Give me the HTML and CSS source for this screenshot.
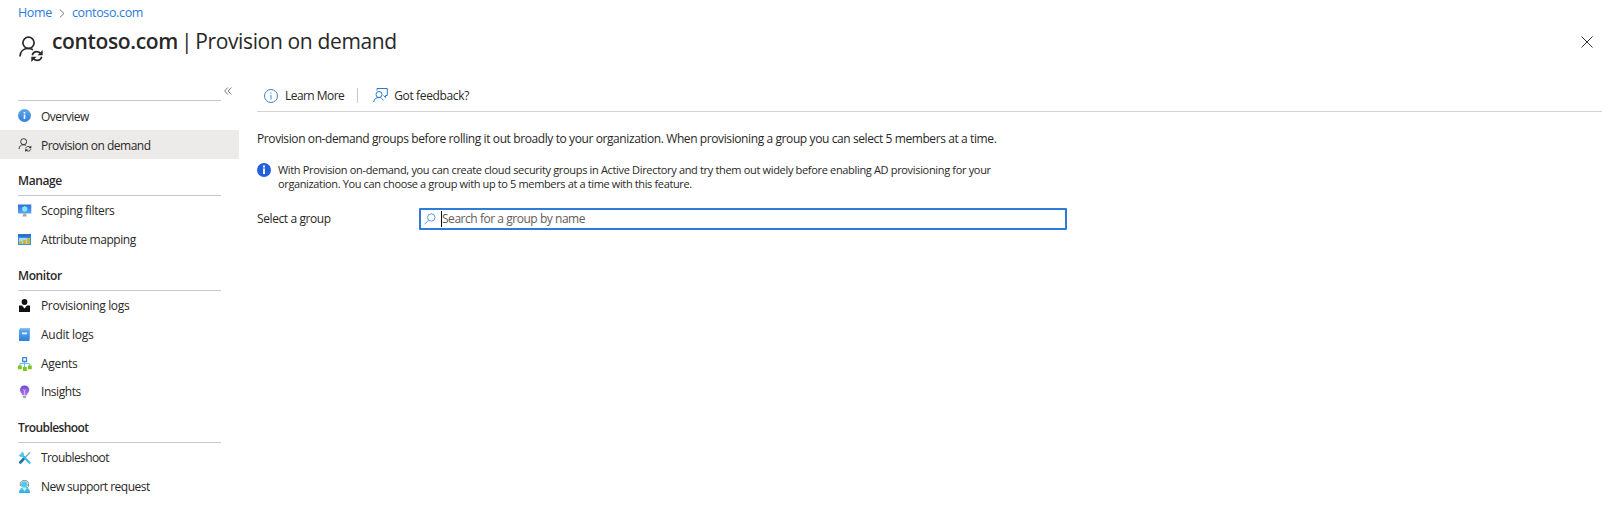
FILE: index.html
```html
<!DOCTYPE html>
<html lang="en">
<head>
<meta charset="utf-8">
<title>contoso.com | Provision on demand</title>
<link rel="stylesheet" href="styles.css">
</head>
<body>
<svg width="0" height="0" class="defs">
  <defs>
    <linearGradient id="blue" x1="0" y1="0" x2="0" y2="1"><stop offset="0" stop-color="#5ea8ea"/><stop offset="1" stop-color="#2f80dc"/></linearGradient>
    <linearGradient id="screen" x1="0" y1="0" x2="0" y2="1"><stop offset="0" stop-color="#2a72d4"/><stop offset="1" stop-color="#5aa6ee"/></linearGradient>
    <linearGradient id="purple" x1="0" y1="0" x2="0" y2="1"><stop offset="0" stop-color="#6e4bd0"/><stop offset="1" stop-color="#a878f0"/></linearGradient>
    <linearGradient id="cyan" x1="0" y1="0" x2="0" y2="1"><stop offset="0" stop-color="#4fd0ee"/><stop offset="1" stop-color="#2fa8dc"/></linearGradient>
    <symbol id="person-sync" viewBox="0 0 24 26">
      <g fill="none" stroke="#2b2a29" stroke-width="1.700">
        <circle cx="9.500" cy="6.800" r="5.600"/>
        <path d="M1 20.500C1.200 15.500 4.500 12.500 9 12.500c2 0 3.500.500 5 1.300"/>
        <path d="M13.300 19.200c.6-2.200 2.200-3.500 4.500-3.500 1.900 0 3.400.9 4.400 2.300M22.700 20.800c-.5 2.200-2.200 3.500-4.500 3.500-1.900 0-3.400-.9-4.400-2.300"/>
      </g>
      <path d="M23.700 14v5.200h-5.200zM12.300 26v-5.200h5.200z" fill="#2b2a29"/>
    </symbol>
  </defs>
</svg>

<header class="header">
  <nav class="crumbs">
    <a class="crumb home">Home</a>
    <svg class="crumb-sep" width="6" height="9" viewBox="0 0 6 9"><path d="M.8.500 5 4.500.8 8.500" fill="none" stroke="#777"/></svg>
    <a class="crumb">contoso.com</a>
  </nav>
  <div class="title-row">
    <svg class="title-icon" width="24" height="26"><use href="#person-sync"/></svg>
    <h1 class="title"><span class="tenant">contoso.com</span><span class="bar">|</span><span class="page-name">Provision on demand</span></h1>
    <svg class="close" width="12" height="12" viewBox="0 0 12 12"><path d="M.5.500l11 11M11.500.500l-11 11" stroke="#333" fill="none"/></svg>
  </div>
</header>

<div class="body">
  <aside class="sidebar">
    <div class="collapse"><svg width="8" height="8" viewBox="0 0 8 8"><path d="M3.800.500.700 4l3.100 3.500M7.300.500 4.200 4l3.100 3.500" fill="none" stroke="#666" stroke-width=".9"/></svg></div>
    <a class="item"><svg class="icon" viewBox="0 0 14 14"><circle cx="6.500" cy="6.500" r="6.500" fill="url(#blue)"/><path d="M5.700 5.500h1.600V10H5.700zM5.700 3h1.600v1.500H5.700z" fill="#fff"/></svg><span class="t-overview">Overview</span></a>
    <a class="item selected"><svg class="icon" viewBox="0 0 14 14"><use href="#person-sync" x="0" y="0" width="14" height="14"/></svg><span class="t-provision">Provision on demand</span></a>
    <h2 class="group">Manage</h2>
    <a class="item"><svg class="icon" viewBox="0 0 14 14"><path d="M0 .5h13.300v9H0z" fill="url(#screen)"/><path d="M5.500 9.500h2.500l.9 3H4.500z" fill="#a8a8a8"/><path d="M6.700 2l2.600 1.500v3L6.700 8 4.100 6.500v-3z" fill="#8be4fa"/></svg><span class="t-scoping">Scoping filters</span></a>
    <a class="item"><svg class="icon" viewBox="0 0 14 14"><path d="M0 1h13v11H0z" fill="#3d8fe0"/><path d="M0 1h13v3H0z" fill="#2a72cf"/><path d="M1 5h11v6H1z" fill="#a5d8f5"/><path d="M1 8.500h3V11H1zM5 7h3v4H5zM9 5h3v6H9z" fill="#c8b63c"/></svg><span class="t-attribute">Attribute mapping</span></a>
    <h2 class="group">Monitor</h2>
    <a class="item"><svg class="icon" viewBox="0 0 14 14"><circle cx="6.500" cy="3" r="2.900" fill="#111"/><path d="M1 6.500h3l2.500 3L9 6.500h3V13H1z" fill="#111"/></svg><span class="t-plogs">Provisioning logs</span></a>
    <a class="item"><svg class="icon" viewBox="0 0 14 14"><path d="M2 0h10v11H2z" fill="#8bc1f0"/><path d="M1 1.500h10.500V13H1z" fill="url(#blue)"/><path d="M4 4.500h5v1.800H4z" fill="#e4f3ff"/></svg><span class="t-audit">Audit logs</span></a>
    <a class="item"><svg class="icon" viewBox="0 0 14 14"><path d="M6.500 4v6M2 9V6.500h9.500V9" fill="none" stroke="#58c8ee"/><path d="M4.700.700h3.800v3.800H4.700z" fill="#fff" stroke="#4384dc" stroke-width="1.300"/><path d="M0 8.500h3.800v3.800H0zM5 10h3.800v4H5zM10 8.500h3.800v3.800H10z" fill="#7fc41c"/></svg><span class="t-agents">Agents</span></a>
    <a class="item short"><svg class="icon" viewBox="0 0 14 14"><path d="M6.500.500C9.500.500 11.300 2.400 11.300 5c0 2.200-2 3.200-2.400 5H4.200C3.800 8.200 2 7.200 2 5 2 2.400 3.600.500 6.500.500z" fill="url(#purple)"/><path d="M5 4.500l1.500 1 1.500-1M6.500 5.500V10" stroke="#dccbfc" stroke-width=".8" fill="none"/><path d="M4.700 10.500h3.700V12L7.500 13.300h-2L4.700 12z" fill="#aaa"/></svg><span class="t-insights">Insights</span></a>
    <h2 class="group trouble">Troubleshoot</h2>
    <a class="item"><svg class="icon" viewBox="0 0 14 14"><path d="M12.200 1.300L7 6.500" stroke="#7da9bd" stroke-width="1.300"/><path d="M6.500 7L2.300 11.500" stroke="#256fac" stroke-width="2.600" stroke-linecap="round"/><path d="M3.500 3.500l8 8.200" stroke="#38bde4" stroke-width="2.300" stroke-linecap="round"/><path d="M3.200.700L5.400 1.500 6 4 4 6 1.500 5.400.700 3.200 2.300 4 3.900 2.500z" fill="#45c8ec"/></svg><span class="t-trouble">Troubleshoot</span></a>
    <a class="item"><svg class="icon" viewBox="0 0 14 14"><path d="M2.300 6V3.500C2.500 1.500 4 .5 6.500.5s4 1 4 3V6c0 1-.8 1.800-2.500 1.800" fill="none" stroke="#888"/><circle cx="6.300" cy="4.500" r="3.300" fill="#4fcaf0"/><path d="M1 13c0-3.500 1.500-5 3-5h5c1.700 0 3 1.500 3 5z" fill="url(#cyan)"/><path d="M4.500 8h4l-2 3.500z" fill="#c9f1fc"/></svg><span class="t-support">New support request</span></a>
  </aside>

  <main class="main">
    <div class="toolbar">
      <svg width="14" height="14" viewBox="0 0 14 14"><circle cx="7" cy="7" r="6.500" fill="none" stroke="#3a80d8"/><path d="M7 6v4.500M7 3.500v1.200" stroke="#3a80d8"/></svg>
      <span class="t-learn">Learn More</span>
      <span class="sep"></span>
      <svg class="fb" width="15" height="15" viewBox="0 0 15 15"><g fill="none" stroke="#2b78d6"><circle cx="6" cy="6.500" r="3"/><path d="M.7 14c.3-2.800 2.400-4.500 5.300-4.500 1.800 0 3.300.9 4.200 3M4 2.500V.500h10.300v7H12.500v2l-2-2"/></g></svg>
      <span class="t-feedback">Got feedback?</span>
    </div>
    <p class="intro">Provision on-demand groups before rolling it out broadly to your organization. When provisioning a group you can select 5 members at a time.</p>
    <div class="notice">
      <svg width="14" height="14" viewBox="0 0 14 14"><circle cx="7" cy="7" r="7" fill="#2460da"/><path d="M6 5.500h2V11H6zM6 2.500h2v2H6z" fill="#fff"/></svg>
      <p class="notice-text"><span class="n1">With Provision on-demand, you can create cloud security groups in Active Directory and try them out widely before enabling AD provisioning for your</span><br><span class="n2">organization. You can choose a group with up to 5 members at a time with this feature.</span></p>
    </div>
    <div class="field">
      <label class="label">Select a group</label>
      <div class="search">
        <svg width="12" height="12" viewBox="0 0 12 12"><circle cx="7.300" cy="4.500" r="3.700" fill="none" stroke="#5f9ade"/><path d="M4.500 7.200L.500 11.300" stroke="#5f9ade"/></svg>
        <span class="caret"></span><span class="placeholder">Search for a group by name</span>
      </div>
    </div>
  </main>
</div>
</body>
</html>
```

FILE: styles.css
```css
* { box-sizing: border-box; }
body { margin: 0; height: 527px; overflow: hidden; background: #fff; color: #292827; font: 12px/18px "Open Sans", "Noto Sans", sans-serif; letter-spacing: -0.4px; white-space: nowrap; }
h1, h2, p { margin: 0; }
svg { flex: none; display: block; }
.defs { position: absolute; }
.header { height: 80px; padding: 4px 18px 0; }
.crumbs { display: flex; align-items: center; height: 18px; color: #2c7bd8; font-size: 12.5px; letter-spacing: -0.35px; }
.crumb-sep { margin: 0 7px; }
.title-row { display: flex; height: 50px; }
.title-icon { margin: 14px 9px 0 1px; }
.title { flex: 1; display: flex; font-size: 21px; line-height: 28px; font-weight: 400; padding-top: 5px; letter-spacing: -.35px; }
.tenant { font-weight: 600; }
.bar { margin: 0 3px; }
.close { margin: 14px 0 0; }
.body { display: flex; }
.sidebar { width: 239px; }
.collapse { height: 21px; margin-left: 18px; width: 203px; border-bottom: 1px solid #c8c8c8; padding-top: 7px; }
.collapse svg { margin-left: 206px; }
.item { display: flex; align-items: center; height: 29px; padding-left: 18px; gap: 9px; }
.item.short { height: 28px; }
.collapse + .item span, .selected span { padding-top: 2px; }
.selected { background: #edebe9; }
.icon { width: 14px; height: 14px; }
.group { height: 37px; margin-left: 18px; width: 203px; padding-top: 13px; border-bottom: 1px solid #c8c8c8; font-size: 12px; line-height: 18px; font-weight: 600; }
.t-overview { letter-spacing: -.53px; }
.t-provision { letter-spacing: -.5px; }
.t-scoping, .t-plogs { letter-spacing: -.35px; }
.t-attribute, .t-insights { letter-spacing: -.44px; }
.t-audit, .t-agents { letter-spacing: -.28px; }
.trouble, .t-trouble { letter-spacing: -.59px; }
.t-support { letter-spacing: -.52px; }
.main { flex: 1; padding: 0 9px 0 18px; }
.toolbar { display: flex; align-items: center; height: 32px; padding-left: 7px; border-bottom: 1px solid #d2d2d2; }
.t-learn { margin-left: 7px; letter-spacing: -.55px; }
.sep { width: 1px; height: 15px; background: #c8c8c8; margin: 0 15px 0 13px; }
.t-feedback { margin-left: 6px; letter-spacing: -.36px; }
.intro { margin-top: 18px; }
.notice { display: flex; margin-top: 15px; gap: 7px; }
.notice-text { font-size: 11px; line-height: 14px; height: 28px; letter-spacing: -.33px; }
.n2 { letter-spacing: -.365px; }
.field { display: flex; align-items: center; margin-top: 17px; height: 22px; }
.label { width: 162px; }
.search { display: flex; align-items: center; width: 648px; height: 22px; border: 2px solid #2f7bd8; border-radius: 1px; padding-left: 3px; color: #605e5c; }
.caret { width: 1px; height: 16px; background: #111; margin-left: 5px; }
.placeholder { letter-spacing: -.46px; }
```
